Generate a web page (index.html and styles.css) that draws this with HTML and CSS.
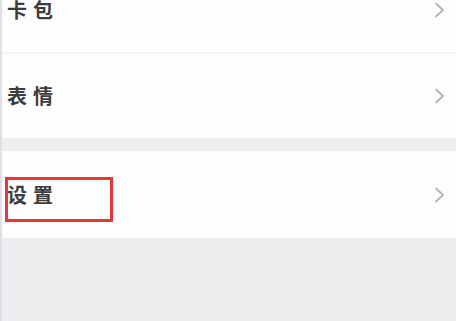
FILE: index.html
```html
<!DOCTYPE html>
<html lang="zh">
<head>
<meta charset="utf-8">
<link rel="stylesheet" href="styles.css">
</head>
<body>
<div class="page">
  <div class="group first">
    <div class="row">
      <span class="label">卡包</span>
      <svg class="chev" width="12" height="16" viewBox="0 0 12 16"><polyline points="2,1.5 9,8 2,14.5" fill="none" stroke="#b3b3b3" stroke-width="1.8" stroke-linecap="round" stroke-linejoin="round"/></svg>
    </div>
    <div class="sep"></div>
    <div class="row">
      <span class="label">表情</span>
      <svg class="chev" width="12" height="16" viewBox="0 0 12 16"><polyline points="2,1.5 9,8 2,14.5" fill="none" stroke="#b3b3b3" stroke-width="1.8" stroke-linecap="round" stroke-linejoin="round"/></svg>
    </div>
  </div>
  <div class="group">
    <div class="row tall">
      <span class="label">设置</span>
      <svg class="chev" width="12" height="16" viewBox="0 0 12 16"><polyline points="2,1.5 9,8 2,14.5" fill="none" stroke="#b3b3b3" stroke-width="1.8" stroke-linecap="round" stroke-linejoin="round"/></svg>
      <div class="highlight"></div>
    </div>
  </div>
</div>
</body>
</html>
```
FILE: styles.css
```css
html, body {
  margin: 0;
  padding: 0;
  height: 100%;
  overflow: hidden;
}
body {
  background: #eeeef0;
  font-family: "Noto Sans CJK SC", "Noto Sans", sans-serif;
  border-left: 2px solid #dde1e6;
  box-sizing: border-box;
}
.group {
  background: #fdfdfd;
  display: flex;
  flex-direction: column;
}
.group.first {
  margin-top: -32px;
  margin-bottom: 13px;
}
.row {
  position: relative;
  height: 84px;
  display: flex;
  align-items: center;
  justify-content: space-between;
  padding: 0 10px 0 5px;
}
.row.tall {
  height: 87px;
}
.label {
  font-size: 20px;
  font-weight: 700;
  color: #3d3d3d;
  letter-spacing: 6px;
  line-height: 24px;
}
.chev {
  display: block;
}
.sep {
  height: 2px;
  background: #f1f2f3;
}
.highlight {
  position: absolute;
  left: 3px;
  top: 26px;
  width: 102px;
  height: 39px;
  border: 3px solid #e2373c;
}
```
